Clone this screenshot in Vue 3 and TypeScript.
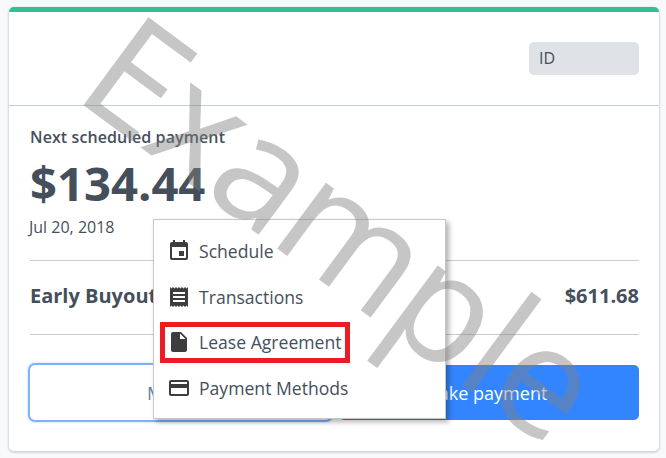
<script setup lang="ts">
const items = [
  { label: 'Schedule', icon: 'M17 12h-5v5h5v-5zM16 1v2H8V1H6v2H5c-1.110 0-1.990.9-1.990 2L3 19c0 1.100.89 2 2 2h14c1.100 0 2-.9 2-2V5c0-1.100-.9-2-2-2h-1V1h-2zm3 18H5V8h14v11z' },
  { label: 'Transactions', icon: 'M18 17H6v-2h12v2zm0-4H6v-2h12v2zm0-4H6V7h12v2zM3 22l1.500-1.500L6 22l1.500-1.500L9 22l1.500-1.500L12 22l1.500-1.500L15 22l1.500-1.500L18 22l1.500-1.500L21 22V2l-1.500 1.500L18 2l-1.500 1.500L15 2l-1.500 1.500L12 2l-1.500 1.500L9 2 7.500 3.500 6 2 4.500 3.500 3 2v20z' },
  { label: 'Lease Agreement', icon: 'M6 2c-1.100 0-1.990.9-1.990 2L4 20c0 1.100.89 2 2 2h12c1.100 0 2-.9 2-2V8l-6-6H6zm7 7V3.500L18.500 9H13z' },
  { label: 'Payment Methods', icon: 'M20 4H4c-1.110 0-1.990.89-1.990 2L2 18c0 1.110.89 2 2 2h16c1.110 0 2-.89 2-2V6c0-1.110-.89-2-2-2zm0 14H4v-6h16v6zm0-10H4V6h16v2z' }
]
</script>

<template>
  <div class="page">
    <section class="card">
      <header class="head">
        <input class="id" placeholder="ID" />
      </header>
      <div class="body">
        <div class="label">Next scheduled payment</div>
        <div class="amount">$134.44</div>
        <div class="date">Jul 20, 2018</div>
        <div class="row">
          <span class="row-label">Early Buyout</span>
          <span class="row-value">$611.68</span>
        </div>
        <div class="actions">
          <button class="btn ghost">Manage</button>
          <button class="btn primary">Make payment</button>
        </div>
      </div>
    </section>
    <ul class="menu">
      <li v-for="it in items" :key="it.label" class="item" :class="{ hl: it.label === 'Lease Agreement' }">
        <svg class="ico" viewBox="0 0 24 24" width="24" height="24"><path :d="it.icon" /></svg>
        <span>{{ it.label }}</span>
      </li>
    </ul>
    <div class="mark">Example</div>
  </div>
</template>

<style>
html, body { margin: 0; background: #f8f9fb; }
</style>

<style scoped>
.page {
  position: relative;
  width: 666px;
  height: 458px;
  padding: 7px 7px 7px 9px;
  box-sizing: border-box;
  overflow: hidden;
  font-family: "Open Sans", sans-serif;
  color: #454f5b;
}
.card {
  width: 650px;
  height: 444px;
  box-sizing: border-box;
  background: #fff;
  border-top: 5px solid #36bd92;
  border-radius: 5px;
  box-shadow: 0 1px 2px 1px rgba(0, 0, 0, .14);
}
.head {
  height: 94px;
  box-sizing: border-box;
  border-bottom: 1px solid #c4cdd5;
  display: flex;
  justify-content: flex-end;
  align-items: flex-start;
  padding: 30px 20px 0 0;
}
.id {
  width: 110px;
  height: 33px;
  box-sizing: border-box;
  padding: 0 10px 2px;
  border: 0;
  border-radius: 5px;
  background: #dfe3e8;
  font: 16px "Open Sans", sans-serif;
  color: #454f5b;
}
.id::placeholder { color: #454f5b; opacity: 1; }
.body { padding: 20px 20px 0 21px; }
.label { font-size: 16px; line-height: 22px; font-weight: 600; letter-spacing: .1px; }
.amount { font-size: 47.200px; line-height: 62px; font-weight: 700; margin-top: 4px; }
.date { font-size: 16px; line-height: 22px; margin-top: 2px; margin-left: -1px; }
.row {
  margin-top: 22px;
  height: 75px;
  box-sizing: border-box;
  border-top: 1px solid #c4cdd5;
  border-bottom: 1px solid #c4cdd5;
  display: flex;
  justify-content: space-between;
  align-items: center;
  font-size: 20px;
  font-weight: 700;
  padding-bottom: 4px;
}
.actions { display: flex; gap: 8px; margin-top: 30px; }
.btn {
  height: 55px;
  box-sizing: border-box;
  border-radius: 5px;
  font: 18px "Open Sans", sans-serif;
}
.ghost {
  width: 301px;
  background: #fff;
  border: 0;
  color: #5c7fa8;
  box-shadow: 0 0 0 2px #7fb0fb, 0 0 2px 3px rgba(127, 176, 251, .25);
}
.primary { flex: 1; background: #3385ff; border: 0; color: #fff; padding-right: 14px; }
.menu {
  position: absolute;
  left: 153px;
  top: 219px;
  width: 293px;
  height: 200px;
  box-sizing: border-box;
  margin: 0;
  padding: 8px 0 0;
  list-style: none;
  background: #fff;
  border: 1px solid #c6c6c6;
  box-shadow: 3px 3px 5px rgba(0, 0, 0, .3);
}
.item {
  display: flex;
  align-items: center;
  gap: 8px;
  height: 45.700px;
  padding-left: 13px;
  font-size: 17.600px;
  color: #454f5b;
}
.ico { fill: #3d3d3d; flex: none; }
.hl { position: relative; }
.hl::after {
  content: "";
  position: absolute;
  left: 6px;
  top: 3px;
  width: 190px;
  height: 41px;
  box-sizing: border-box;
  border: 5px solid #ed1c24;
}
.mark {
  position: absolute;
  left: 107px;
  top: -28px;
  font-size: 153px;
  letter-spacing: -2.500px;
  line-height: 1;
  color: rgba(128, 128, 128, .45);
  transform: rotate(36.500deg);
  transform-origin: 0 50%;
  white-space: nowrap;
  pointer-events: none;
}
</style>
